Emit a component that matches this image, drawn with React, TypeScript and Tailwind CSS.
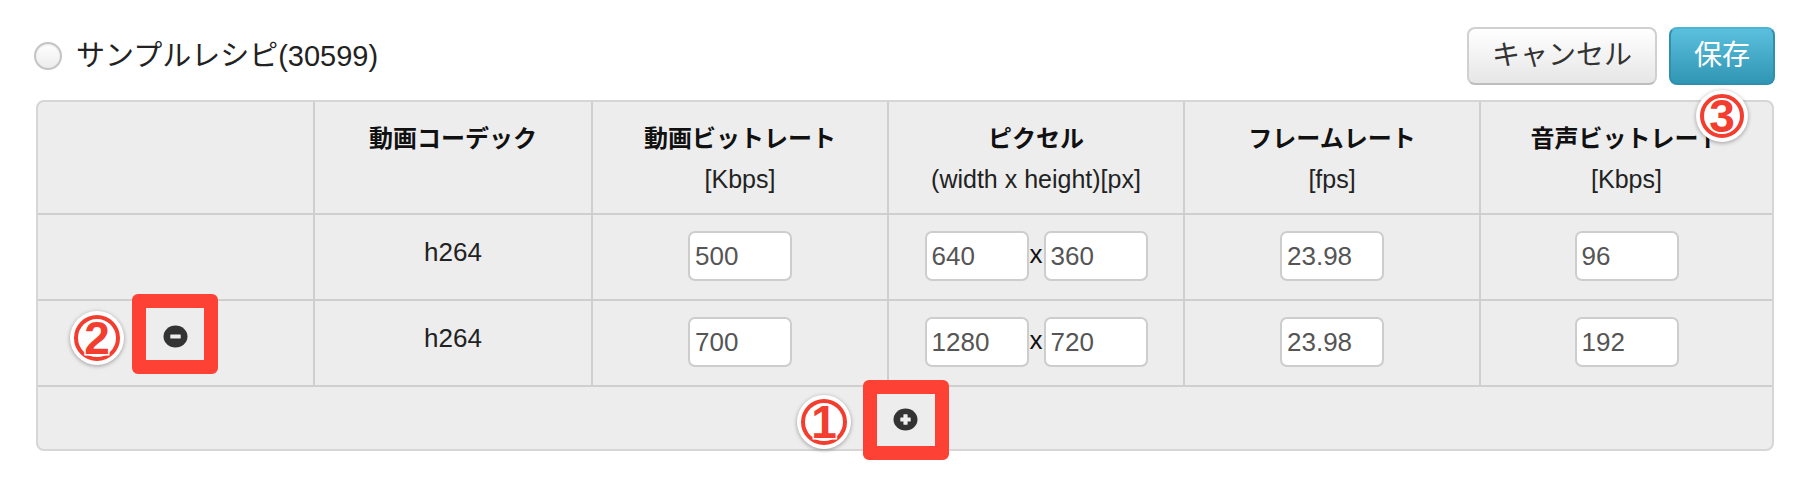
import React from "react";

const FONT = "font-['Liberation_Sans','Noto_Sans_CJK_JP',sans-serif]";

function Num({ v, w = "w-[104px]" }: { v: string; w?: string }) {
  return (
    <div
      className={`${w} h-[50px] border-2 border-[#cdcdcd] rounded-[7px] bg-white pl-[5px] flex items-center text-[26px] text-[#555555] leading-none`}
    >
      {v}
    </div>
  );
}

function MinusIcon() {
  return (
    <svg width="25" height="23" viewBox="0 0 24 22">
      <ellipse cx="12" cy="11" rx="11.5" ry="10.5" fill="#333333" />
      <rect x="7" y="9" width="10" height="4" rx="0.5" fill="#eeeeee" />
    </svg>
  );
}

function PlusIcon() {
  return (
    <svg width="25" height="23" viewBox="0 0 24 22">
      <ellipse cx="12" cy="11" rx="11.5" ry="10.5" fill="#333333" />
      <rect x="7" y="9" width="10" height="4" rx="0.5" fill="#eeeeee" />
      <rect x="10" y="6" width="4" height="10" rx="0.5" fill="#eeeeee" />
    </svg>
  );
}

function Badge({ n, className }: { n: string; className: string }) {
  return (
    <div
      className={`absolute rounded-full bg-white shadow-[0_1px_4px_rgba(0,0,0,0.35)] ${className}`}
    >
      <div className="absolute inset-[4px] rounded-full border-[4px] border-[#f23d2f]" />
      <div className="absolute inset-0 flex items-center justify-center text-[46px] font-bold text-[#f23d2f] leading-none [-webkit-text-stroke:3px_white] [paint-order:stroke_fill] font-['Liberation_Sans',sans-serif]">
        {n}
      </div>
    </div>
  );
}

const cols = "grid grid-cols-[275px_278px_296px_296px_296px_293px]";
const cell = "border-l-2 border-[#cfcfcf]";

export default function App() {
  return (
    <div className={`relative w-[1800px] h-[492px] bg-white text-[#333333] pl-[36px] pr-[26px] pt-[27px] ${FONT}`}>
      {/* top bar */}
      <div className="flex items-center justify-between h-[58px]">
        <div className="flex items-center gap-[14px] -ml-[2px]">
          <span className="w-[28px] h-[28px] rounded-full border-2 border-[#c4c4c4] bg-gradient-to-b from-white to-[#ececec] shadow-[inset_0_1px_2px_rgba(0,0,0,0.08)]" />
          <span className="text-[29px] leading-none text-[#222222]">サンプルレシピ(30599)</span>
        </div>
        <div className="flex items-center gap-[12px] -mr-[1px]">
          <button className="w-[190px] h-[58px] rounded-[8px] border-2 border-[#d0d0d0] border-b-[#bdbdbd] bg-gradient-to-b from-white to-[#e6e6e6] text-[28px] text-[#333333] flex items-center justify-center">
            キャンセル
          </button>
          <button className="w-[106px] h-[58px] rounded-[8px] border-2 border-[#2f8fb0] border-t-[#4fb3d4] bg-gradient-to-b from-[#5bc0de] to-[#2f96b4] text-[28px] text-white flex items-center justify-center">
            保存
          </button>
        </div>
      </div>

      {/* table */}
      <div className="mt-[15px] border-2 border-[#d6d6d6] rounded-[8px] bg-[#ededed] overflow-hidden">
        {/* header */}
        <div className={`${cols} h-[113px] border-b-2 border-[#cfcfcf]`}>
          <div />
          {[
            ["動画コーデック", ""],
            ["動画ビットレート", "[Kbps]"],
            ["ピクセル", "(width x height)[px]"],
            ["フレームレート", "[fps]"],
            ["音声ビットレート", "[Kbps]"],
          ].map(([t, s]) => (
            <div key={t} className={`${cell} pt-[17px] text-center leading-[40px]`}>
              <div className="text-[24px] font-bold text-[#111111]">{t}</div>
              {s && <div className="text-[25px] text-[#222222]">{s}</div>}
            </div>
          ))}
        </div>

        {/* rows */}
        {[
          { remove: false, br: "500", w: "640", h: "360", fps: "23.98", ab: "96" },
          { remove: true, br: "700", w: "1280", h: "720", fps: "23.98", ab: "192" },
        ].map((r, i) => (
          <div key={i} className={`${cols} h-[86px] border-b-2 border-[#cfcfcf]`}>
            <div className="flex justify-center items-start pt-[24px]">{r.remove && <MinusIcon />}</div>
            <div className={`${cell} pt-[17px] text-center leading-[40px] text-[26px] text-[#222222]`}>h264</div>
            <div className={`${cell} flex justify-center items-start pt-[16px]`}>
              <Num v={r.br} />
            </div>
            <div className={`${cell} flex justify-center items-start pt-[16px]`}>
              <div className="flex items-center gap-[1px]">
                <Num v={r.w} />
                <span className="text-[26px] text-[#111111] leading-none -mt-[4px]">x</span>
                <Num v={r.h} />
              </div>
            </div>
            <div className={`${cell} flex justify-center items-start pt-[16px]`}>
              <Num v={r.fps} />
            </div>
            <div className={`${cell} flex justify-center items-start pt-[16px]`}>
              <Num v={r.ab} />
            </div>
          </div>
        ))}

        {/* footer */}
        <div className="h-[62px] flex justify-center items-start pt-[21px]">
          <PlusIcon />
        </div>
      </div>

      {/* annotations */}
      <div className="absolute left-[132px] top-[294px] w-[86px] h-[80px] border-[14px] border-[#fd4134] rounded-[6px]" />
      <div className="absolute left-[863px] top-[380px] w-[86px] h-[80px] border-[14px] border-[#fd4134] rounded-[6px]" />
      <Badge n="2" className="left-[70px] top-[311px] w-[54px] h-[54px]" />
      <Badge n="1" className="left-[797px] top-[395px] w-[54px] h-[54px]" />
      <Badge n="3" className="left-[1696px] top-[90px] w-[52px] h-[52px]" />
    </div>
  );
}
